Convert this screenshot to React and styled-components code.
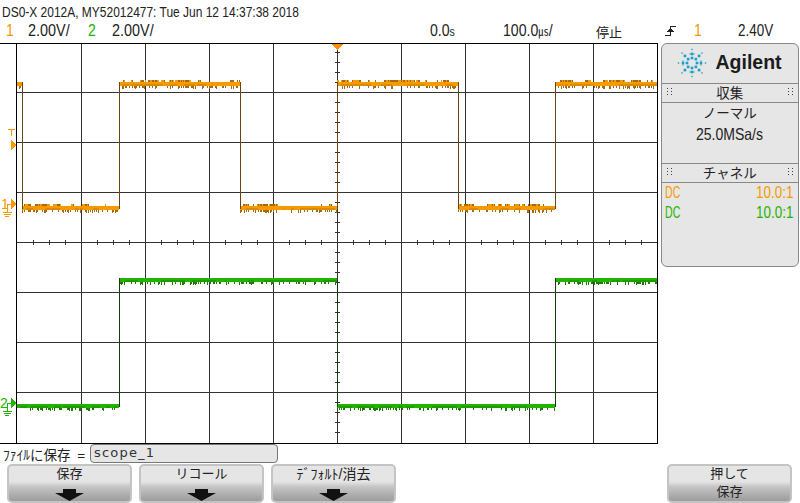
import React from 'react'
import styled, { createGlobalStyle } from 'styled-components'

const FONT = '"Liberation Sans", "Noto Sans CJK JP", sans-serif'
const ORANGE = '#f59a00'
const GREEN = '#22b400'

const GRID_X = [81, 145, 209, 273, 337, 401, 465, 529, 593]
const GRID_Y = [92, 142, 192, 242, 292, 342, 392]

// little repeatable noise so the traces look like captured data
const noise = (seed) => {
    let s = seed
    return () => {
        s = (s * 1103515245 + 12345) & 0x7fffffff
        return s / 0x7fffffff
    }
}

const Band = ({ x1, x2, y, h, color, dark, mid, seed, top }) => {
    const rnd = noise(seed)
    const marks = []
    let topOn = false
    let midOn = false
    for (let x = x1; x < x2; x++) {
        if (rnd() < 0.16) topOn = !topOn
        if (rnd() < 0.1) midOn = !midOn
        const r = rnd()
        if (top && topOn) marks.push(<rect key={`t${x}`} x={x} y={y - 2} width="1" height="2" fill={r < 0.5 ? dark : color} />)
        if (midOn) marks.push(<rect key={`m${x}`} x={x} y={y + h - 2} width="1" height="2" fill={mid} />)
        if (r < 0.35) marks.push(<rect key={`b${x}`} x={x} y={y + h} width="1" height={r < 0.12 ? 3 : 2} fill={dark} />)
    }
    return (
        <g>
            <rect x={x1} y={y} width={x2 - x1} height={h} fill={color} />
            {marks}
        </g>
    )
}

const Channel = ({ high, low, edges, color, dark, mid, edgeColor, seed, startHigh, top }) => {
    const points = [17, ...edges, 657]
    return (
        <g>
            {points.slice(0, -1).map((x, i) => {
                const isHigh = (i % 2 === 0) === startHigh
                return <Band key={x} x1={x} x2={points[i + 1]} y={isHigh ? high : low} h={4} color={color} dark={dark} mid={mid} seed={seed + i * 7} top={top} />
            })}
            {edges.map((x) => (
                <rect key={x} x={x} y={high} width="1" height={low - high + 3} fill={edgeColor} />
            ))}
        </g>
    )
}

const GroundMark = ({ y, color, label }) => (
    <g fill={color}>
        {label}
        <rect x="7" y={y} width="1" height="8" />
        <rect x="7" y={y} width="5" height="1" />
        <polygon points={`11,${y - 5} 16,${y} 11,${y + 5}`} />
        <rect x="3" y={y + 8} width="9" height="1" />
        <rect x="4" y={y + 10} width="7" height="1" />
        <rect x="5" y={y + 12} width="4" height="1" />
    </g>
)

const ScopeScreen = () => (
    <ScreenSvg viewBox="0 40 660 405" width="660" height="405" shapeRendering="crispEdges">
        <rect x="16" y="43" width="641" height="400" fill="#fff" />
        {GRID_X.map((x) => <rect key={x} x={x} y="43" width="1" height="400" fill="#333" />)}
        {GRID_Y.map((y) => <rect key={y} x="16" y={y} width="641" height="1" fill="#333" />)}
        {Array.from({ length: 40 }, (_, i) => 33 + i * 16).filter((x) => x < 657).map((x) => (
            <rect key={x} x={x} y="240" width="1" height="5" fill="#333" />
        ))}
        {Array.from({ length: 39 }, (_, i) => 52 + i * 10).map((y) => (
            <rect key={y} x="335" y={y} width="5" height="1" fill="#333" />
        ))}
        <Channel high={82} low={206} edges={[22, 119, 240, 337, 458, 555]} color={ORANGE} dark="#a86a08" mid="#d98a06" edgeColor="#6b4510" seed={11} startHigh top />
        <Channel high={278} low={404} edges={[119, 337, 555]} color={GREEN} dark="#1c7c04" mid="#1e9a02" edgeColor="#123c10" seed={47} startHigh={false} />
        <rect x="16" y="43" width="1" height="400" fill="#000" />
        <rect x="657" y="43" width="1" height="401" fill="#000" />
        <rect x="0" y="43" width="658" height="1" fill="#000" />
        <rect x="0" y="443" width="658" height="1" fill="#000" />
        <polygon points="332,44 343,44 337.5,50" fill="#ff8c00" />
        <g fill={ORANGE}>
            <rect x="8" y="129" width="7" height="1" />
            <rect x="11" y="129" width="1" height="7" />
            <polygon points="11,140 16,145 11,150" />
        </g>
        <GroundMark y={204} color={ORANGE} label={<ChannelNum x="1" y="209" fill={ORANGE}>1</ChannelNum>} />
        <GroundMark y={403} color={GREEN} label={<ChannelNum x="0" y="408" fill={GREEN}>2</ChannelNum>} />
    </ScreenSvg>
)

const Spark = () => {
    const dots = []
    const dot = (key, x, y, size) => dots.push(
        <rect key={key} x={15 + x - size / 2} y={15 + y - size / 2} width={size} height={size} fill="#1a9fc8" />
    )
    for (let a = 0; a < 8; a++) {
        const t = (a * Math.PI) / 4
        const onAxis = a % 2 === 0
        const radii = onAxis ? [5, 9, 13.5] : [5.5, 10, 14]
        radii.forEach((r, i) => {
            const x = Math.cos(t) * r
            const y = Math.sin(t) * r
            dot(`${a}-${i}`, x, y, i === 2 ? 1.4 : 2.6)
            // the axis spokes carry a small plus in the middle
            if (onAxis && i === 1) {
                dot(`${a}-p`, x + Math.sin(t) * 2, y + Math.cos(t) * 2, 1.2)
                dot(`${a}-q`, x - Math.sin(t) * 2, y - Math.cos(t) * 2, 1.2)
            }
        })
    }
    return <svg width="30" height="30" viewBox="0 0 30 30">{dots}</svg>
}

const Grip = () => (
    <svg width="5" height="7" viewBox="0 0 5 7" shapeRendering="crispEdges" fill="#444">
        {[0, 3, 6].map((y) => (
            <g key={y}>
                <rect x="0" y={y} width="1" height="1" />
                <rect x="4" y={y} width="1" height="1" />
            </g>
        ))}
    </svg>
)

const ArrowDown = () => (
    <svg width="29" height="12" viewBox="0 0 29 12" fill="#111">
        <polygon points="8,0 21,0 21,4 29,4 14.5,12 0,4 8,4" />
    </svg>
)

const TriggerEdge = () => (
    <svg width="12" height="12" viewBox="0 0 12 12" shapeRendering="crispEdges" fill="#222">
        <rect x="0" y="10" width="6" height="1" />
        <rect x="5" y="1" width="1" height="10" />
        <rect x="5" y="1" width="6" height="1" />
        <polygon points="5.5,3 2,7 9,7" />
    </svg>
)

const SoftKey = ({ label, second, size }) => (
    <KeyButton>
        <KeyLabel $size={size}>{label}</KeyLabel>
        {second ? <KeyLabel>{second}</KeyLabel> : <ArrowSlot><ArrowDown /></ArrowSlot>}
    </KeyButton>
)

const App = () => (
    <Page>
        <GlobalStyle />
        <TitleBar><Squeeze $x={0.778}>DS0-X 2012A, MY52012477: Tue Jun 12 14:37:38 2018</Squeeze></TitleBar>
        <InfoBar>
            <InfoCell $w={28} $pad={6} $color={ORANGE}><Squeeze $x={0.88}>1</Squeeze></InfoCell>
            <InfoCell $w={60}><Squeeze $x={0.9}>2.00V/</Squeeze></InfoCell>
            <InfoCell $w={24} $color={GREEN}><Squeeze $x={0.88}>2</Squeeze></InfoCell>
            <InfoCell $w={318}><Squeeze $x={0.9}>2.00V/</Squeeze></InfoCell>
            <InfoCell $w={73}><Squeeze $x={0.88}>0.0<SmallUnit>s</SmallUnit></Squeeze></InfoCell>
            <InfoCell $w={93}><Squeeze $x={0.88}>100.0<MicroUnit>㎲</MicroUnit>/</Squeeze></InfoCell>
            <InfoCell $w={69} $size={13}>停止</InfoCell>
            <InfoCell $w={29}><TriggerEdge /></InfoCell>
            <InfoCell $w={44} $color={ORANGE}><Squeeze $x={0.88}>1</Squeeze></InfoCell>
            <InfoCell $w={50}><Squeeze $x={0.84}>2.40V</Squeeze></InfoCell>
        </InfoBar>
        <Middle>
            <ScopeScreen />
            <SidePanel>
                <LogoRow>
                    <Spark />
                    <LogoText>Agilent</LogoText>
                </LogoRow>
                <PanelHeader><Grip />収集<Grip /></PanelHeader>
                <AcqBlock>
                    <PanelLine $size={13.5}>ノーマル</PanelLine>
                    <PanelLine><Squeeze $x={0.85} $origin="center">25.0MSa/s</Squeeze></PanelLine>
                </AcqBlock>
                <PanelHeader><Grip />チャネル<Grip /></PanelHeader>
                <ChannelRow $color={ORANGE}><Squeeze $x={0.66}>DC</Squeeze><Squeeze $x={0.84} $origin="right">10.0:1</Squeeze></ChannelRow>
                <ChannelRow $color={GREEN}><Squeeze $x={0.66}>DC</Squeeze><Squeeze $x={0.84} $origin="right">10.0:1</Squeeze></ChannelRow>
            </SidePanel>
        </Middle>
        <FileRow>
            <FileLabel>ﾌｧｲﾙに保存 =</FileLabel>
            <FileInput>scope_1</FileInput>
        </FileRow>
        <KeyRow>
            <SoftKey label="保存" />
            <SoftKey label="リコール" />
            <SoftKey label="ﾃﾞﾌｫﾙﾄ/消去" size={14} />
            <KeySpacer />
            <SoftKey label="押して" second="保存" />
        </KeyRow>
    </Page>
)

export default App

const GlobalStyle = createGlobalStyle`
    html, body {
        margin: 0;
        padding: 0;
        background: #fff;
    }
`

const Page = styled.div`
    width: 800px;
    height: 503px;
    overflow: hidden;
    background: #fff;
    color: #222;
    font-family: ${FONT};
    font-size: 16px;
    display: flex;
    flex-direction: column;
`

// the scope's own font is tall and narrow, no installed family has that shape
const Squeeze = styled.span`
    display: inline-block;
    white-space: nowrap;
    transform: scaleX(${(p) => p.$x});
    transform-origin: ${(p) => p.$origin || 'left'};
`

const TitleBar = styled.div`
    height: 22px;
    line-height: 23px;
    padding-left: 2px;
    font-size: 15.4px;
    white-space: nowrap;
`

const InfoBar = styled.div`
    height: 18px;
    display: flex;
    align-items: center;
    font-size: 16px;
`

const InfoCell = styled.div`
    width: ${(p) => p.$w}px;
    padding-left: ${(p) => p.$pad || 0}px;
    box-sizing: border-box;
    color: ${(p) => p.$color || '#222'};
    font-size: ${(p) => p.$size || 16}px;
    white-space: nowrap;
    display: flex;
    align-items: center;
`

const SmallUnit = styled.span`
    font-size: 12px;
`

const MicroUnit = styled.span`
    font-size: 12px;
`

const Middle = styled.div`
    height: 404px;
    display: flex;
    align-items: flex-start;
`

const ScreenSvg = styled.svg`
    display: block;
    flex: none;
    margin-bottom: -1px;
`

const ChannelNum = styled.text`
    font-family: ${FONT};
    font-size: 14px;
`

const SidePanel = styled.div`
    margin-top: 3px;
    margin-left: 0.5px;
    width: 138.5px;
    height: 224px;
    box-sizing: border-box;
    background: #e6e6e6;
    border: 1.5px solid #888;
    border-radius: 6px;
    display: flex;
    flex-direction: column;
`

const LogoRow = styled.div`
    height: 38.5px;
    flex: none;
    display: flex;
    align-items: center;
    gap: 9px;
    padding-left: 15px;
    padding-bottom: 1px;
    box-sizing: border-box;
`

const LogoText = styled.div`
    font-size: 19.5px;
    font-weight: 700;
    color: #1c1c1c;
`

const PanelHeader = styled.div`
    height: 20px;
    flex: none;
    box-sizing: border-box;
    border-top: 1px solid #888;
    border-bottom: 1px solid #888;
    display: flex;
    align-items: center;
    justify-content: space-between;
    padding: 0 5px 2px;
    font-size: 13.5px;
`

const AcqBlock = styled.div`
    height: 60px;
    flex: none;
    box-sizing: border-box;
    padding-top: 1px;
    text-align: center;
`

const PanelLine = styled.div`
    height: 20px;
    line-height: 20px;
    font-size: ${(p) => p.$size || 16.5}px;
`

const ChannelRow = styled.div`
    height: 20px;
    line-height: 20px;
    display: flex;
    justify-content: space-between;
    padding: 0 5px 0 3px;
    color: ${(p) => p.$color};
    font-size: 16px;
`

const FileRow = styled.div`
    height: 20px;
    flex: none;
    display: flex;
    align-items: center;
    padding-left: 3px;
    padding-bottom: 1px;
    box-sizing: border-box;
`

const FileLabel = styled.div`
    width: 87px;
    font-size: 13.5px;
    word-spacing: 3px;
    white-space: nowrap;
`

const FileInput = styled.div`
    width: 188px;
    height: 19px;
    box-sizing: border-box;
    background: #e6e6e6;
    border: 1px solid #777;
    border-radius: 4px;
    font-family: "DejaVu Sans", sans-serif;
    font-size: 13px;
    letter-spacing: 1.2px;
    line-height: 16px;
    padding-left: 3px;
    color: #333;
`

const KeyRow = styled.div`
    height: 39px;
    flex: none;
    display: flex;
    gap: 7px;
    padding-left: 7px;
`

const KeySpacer = styled.div`
    width: 257px;
`

const KeyButton = styled.div`
    width: 125px;
    height: 39px;
    box-sizing: border-box;
    border: 2px solid #c4c4c4;
    border-radius: 5px;
    background: linear-gradient(#e6e6e6 0%, #e4e4e4 45%, #c4c4c4 60%, #9c9c9c 100%);
    display: flex;
    flex-direction: column;
    align-items: center;
`

const KeyLabel = styled.div`
    height: 18px;
    line-height: 16px;
    font-size: ${(p) => p.$size || 13}px;
    white-space: nowrap;
`

const ArrowSlot = styled.div`
    margin-top: 5px;
    line-height: 0;
`
